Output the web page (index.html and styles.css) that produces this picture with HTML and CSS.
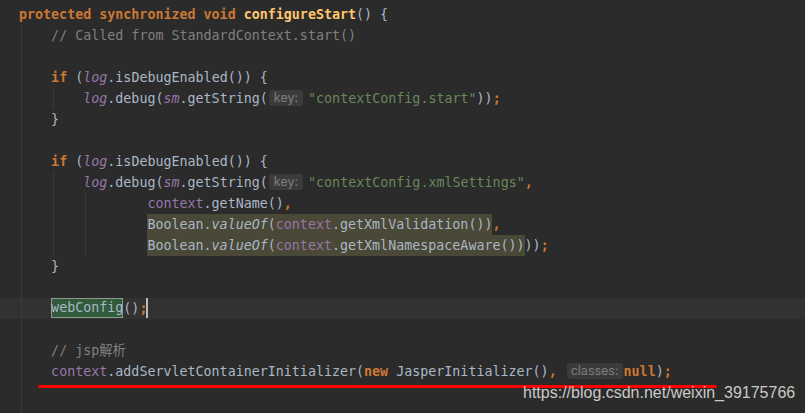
FILE: index.html
```html
<!DOCTYPE html>
<html>
	<head>
		<meta charset="utf-8">
		<title>ContextConfig.java</title>
		<link rel="stylesheet" href="styles.css">
	</head>
	<body>
		<div class="editor">
			<div class="code">
				<div class="line"><span class="kw">protected synchronized void</span> <span class="decl">configureStart</span>() {</div>
				<div class="line g1">    <span class="cm">// Called from StandardContext.start()</span></div>
				<div class="line g1"> </div>
				<div class="line g1">    <span class="kw">if</span> (<span class="fld st">log</span>.isDebugEnabled()) {</div>
				<div class="line g2">        <span class="fld st">log</span>.debug(<span class="fld st">sm</span>.getString(<span class="hint">key:</span><span class="str">"contextConfig.start"</span>))<span class="kw">;</span></div>
				<div class="line g1">    }</div>
				<div class="line g1"> </div>
				<div class="line g1">    <span class="kw">if</span> (<span class="fld st">log</span>.isDebugEnabled()) {</div>
				<div class="line g2">        <span class="fld st">log</span>.debug(<span class="fld st">sm</span>.getString(<span class="hint">key:</span><span class="str">"contextConfig.xmlSettings"</span><span class="kw">,</span></div>
				<div class="line g3">                <span class="fld">context</span>.getName()<span class="kw">,</span></div>
				<div class="line g3">                <span class="mark">Boolean.<span class="st">valueOf</span>(<span class="fld">context</span>.getXmlValidation())</span><span class="kw">,</span></div>
				<div class="line g3">                <span class="mark">Boolean.<span class="st">valueOf</span>(<span class="fld">context</span>.getXmlNamespaceAware())</span>))<span class="kw">;</span></div>
				<div class="line g1">    }</div>
				<div class="line g1"> </div>
				<div class="line g1 current">    <span class="sel">webConfig</span>()<span class="kw">;</span><span class="caret"></span></div>
				<div class="line g1"> </div>
				<div class="line g1">    <span class="cm">// jsp解析</span></div>
				<div class="line g1">    <span class="fld">context</span>.addServletContainerInitializer(<span class="kw">new</span> JasperInitializer()<span class="kw">,</span> <span class="hint hint-wide">classes:</span><span class="kw">null</span>)<span class="kw">;</span></div>
				<div class="line g1"> </div>
				<div class="line g1"> </div>
			</div>
			<div class="underline"></div>
			<div class="watermark">https://blog.csdn.net/weixin_39175766</div>
		</div>
	</body>
</html>
```

FILE: styles.css
```css
* {
	margin: 0;
	padding: 0;
}

html, body {
	background: #2b2b2b;
	overflow: hidden;
}

.editor {
	width: 805px;
	height: 413px;
	position: relative;
	overflow: hidden;
}

.code {
	padding-top: 4px;
	font-family: "DejaVu Sans Mono", "Liberation Mono", "Noto Sans CJK SC", monospace;
	font-size: 13.33px;
	color: #a9b7c6;
}

.line {
	height: 21px;
	line-height: 21px;
	padding-left: 19px;
	white-space: pre;
	background-repeat: no-repeat;
	background-size: 1px 100%;
}

/* indent guides */
.g1 {
	background-image: linear-gradient(#3a3a3a, #3a3a3a);
	background-position: 21px 0;
}

.g2 {
	background-image: linear-gradient(#3a3a3a, #3a3a3a), linear-gradient(#3a3a3a, #3a3a3a);
	background-position: 21px 0, 53px 0;
}

.g3 {
	background-image: linear-gradient(#3a3a3a, #3a3a3a), linear-gradient(#3a3a3a, #3a3a3a), linear-gradient(#3a3a3a, #3a3a3a);
	background-position: 21px 0, 53px 0, 85px 0;
}

.line.current {
	background-color: #323232;
}

.kw {
	color: #cc7832;
	font-weight: bold;
}

.decl {
	color: #ffc66d;
	font-weight: bold;
}

.cm {
	color: #808080;
}

.str {
	color: #6a8759;
}

.fld {
	color: #9876aa;
}

.st {
	font-style: italic;
}

.hint {
	display: inline-block;
	font-family: Inter, "Noto Sans", sans-serif;
	font-size: 12.5px;
	line-height: 16px;
	color: #7d7d7d;
	background: #3b3b3b;
	border-radius: 3px;
	padding: 0 5px;
	margin: 0 5px 0 1px;
	vertical-align: 1px;
}

.hint-wide {
	padding: 0 4px;
	margin: 0 1px 0 2px;
}

.mark {
	display: inline-block;
	background: #4a4836;
	line-height: 21px;
	vertical-align: top;
}

.sel {
	display: inline-block;
	line-height: 20px;
	background: #325a3c;
	box-shadow: inset 0 0 0 1px #8e9a8e;
	vertical-align: top;
}

.caret {
	display: inline-block;
	width: 2px;
	height: 20px;
	background: #bbbbbb;
	vertical-align: top;
	margin-left: -1px;
}

.underline {
	position: absolute;
	left: 38px;
	top: 385px;
	width: 679px;
	height: 3px;
	background: #ff0000;
	border-radius: 2px;
}

.watermark {
	position: absolute;
	left: 523px;
	top: 384px;
	font-family: "Liberation Sans", Arial, sans-serif;
	font-size: 16px;
	line-height: 18px;
	color: rgba(255, 255, 255, 0.75);
	white-space: nowrap;
}
```
